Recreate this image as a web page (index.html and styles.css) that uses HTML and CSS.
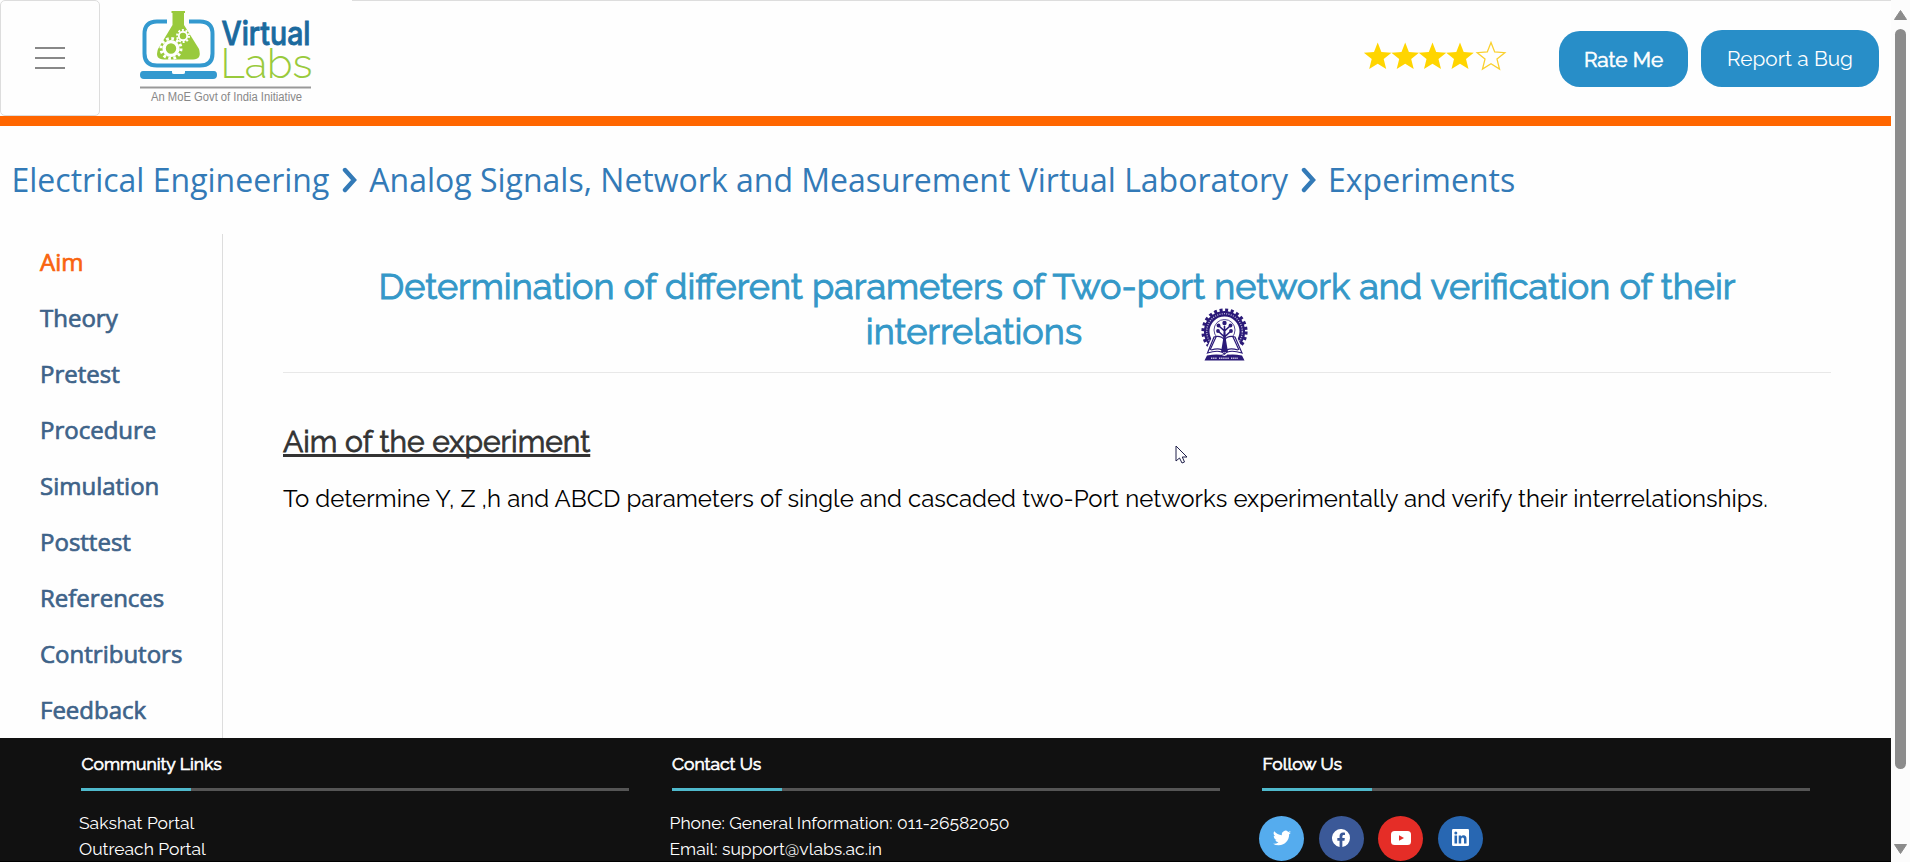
FILE: index.html
```
<!DOCTYPE html>
<html lang="en">
<head>
<meta charset="utf-8">
<title>Virtual Labs</title>
<link rel="stylesheet" href="styles.css">
</head>
<body>
<div class="page">
  <div class="content">
    <header class="header">
      <button class="menu" aria-label="Menu"><span></span><span></span><span></span></button>
      <svg class="logo" width="176" height="96" viewBox="138 8 176 96">
        <g fill="none" stroke="#3399cf" stroke-width="4">
          <path d="M167 21.500H157Q144.500 21.500 144.500 34V53.500Q144.500 65.500 157 65.500H200Q212.500 65.500 212.500 53.500V34Q212.500 21.500 200 21.500H189"/>
        </g>
        <path fill="#3399cf" d="M143 71H172V72.500Q172 74 174 74H183Q185 74 185 72.500V71H214Q217 71 217 75Q217 79 213 79H144Q140 79 140 75Q140 71 143 71Z"/>
        <path fill="#99ca3c" d="M171.500 11H185V13H184V25L199 49Q202 59.500 193 59.500H164Q154.500 59.500 158 49L172.500 25V13H171.500Z"/>
        <g fill="none" stroke="#fff">
          <circle cx="171" cy="48.500" r="6.900" stroke-width="3.400"/>
          <circle cx="171" cy="48.500" r="10" stroke-width="3" stroke-dasharray="2.700 2.536"/>
          <circle cx="183" cy="36" r="4.200" stroke-width="1.900"/>
          <circle cx="183" cy="36" r="6" stroke-width="1.900" stroke-dasharray="2 1.770"/>
        </g>
        <text class="logo-virtual" x="221.500" y="44.500" textLength="89" lengthAdjust="spacingAndGlyphs">Virtual</text>
        <text class="logo-labs" x="220.500" y="78" textLength="92" lengthAdjust="spacingAndGlyphs">Labs</text>
        <path d="M140 87.500H311" stroke="#999" stroke-width="1.800"/>
        <text class="logo-tag" x="151" y="101" textLength="151" lengthAdjust="spacingAndGlyphs">An MoE Govt of India Initiative</text>
      </svg>
      <div class="header-rest">
        <svg class="stars" width="144" height="30" viewBox="1363 41 144 30">
          <defs>
            <path id="star" d="M0 -14L3.700 -4.500L13.800 -3.800L6 2.600L8.500 12.500L0 7.200L-8.500 12.500L-6 2.600L-13.800 -3.800L-3.700 -4.500Z"/>
          </defs>
          <g fill="#ffd500">
            <use href="#star" x="1377.700" y="56.500"/>
            <use href="#star" x="1405.200" y="56.500"/>
            <use href="#star" x="1432.500" y="56.500"/>
            <use href="#star" x="1460" y="56.500"/>
          </g>
          <use href="#star" x="1491" y="56.500" fill="none" stroke="#fad02e" stroke-width="1.300"/>
        </svg>
        <button class="btn btn-rate">Rate Me</button>
        <button class="btn btn-bug">Report a Bug</button>
      </div>
    </header>

    <nav class="crumbs">
      <a>Electrical Engineering</a>
      <svg width="16" height="26" viewBox="0 0 16 26"><path d="M3 3L12 13L3 23" fill="none" stroke="#337ab7" stroke-width="4.400" stroke-linecap="round"/></svg>
      <a>Analog Signals, Network and Measurement Virtual Laboratory</a>
      <svg width="16" height="26" viewBox="0 0 16 26"><path d="M3 3L12 13L3 23" fill="none" stroke="#337ab7" stroke-width="4.400" stroke-linecap="round"/></svg>
      <a>Experiments</a>
    </nav>

    <div class="main">
      <nav class="side">
        <a class="active">Aim</a>
        <a>Theory</a>
        <a>Pretest</a>
        <a>Procedure</a>
        <a>Simulation</a>
        <a>Posttest</a>
        <a>References</a>
        <a>Contributors</a>
        <a>Feedback</a>
      </nav>
      <main class="article">
        <h1 class="title">
          <span class="title-a">Determination of different parameters of Two-port network and verification of their</span>
          <span class="title-b"><span>interrelations</span>
            <svg class="emblem" width="47" height="53" viewBox="0 0 47 53">
              <g fill="none" stroke="#2b1a78">
                <circle cx="23.500" cy="23.500" r="17.800" stroke-width="5.600"/>
                <circle cx="23.500" cy="23.500" r="21.300" stroke-width="3.600" stroke-dasharray="3 2.576"/>
                <circle cx="23.500" cy="23.500" r="17.800" stroke="#c9c3e2" stroke-width="1.300" stroke-dasharray="1 1.300"/>
                <circle cx="23.500" cy="22" r="10.500" stroke-width=".8"/>
              </g>
              <path fill="#fff" d="M3 46L11 29Q20 27 23.500 32Q27 27 36 29L44 46Z"/>
              <g fill="none" stroke="#2b1a78" stroke-width="1.200">
                <path d="M6.500 45L13 29Q20 27 23.500 32Q27 27 34 29L41 45Q28 41 23.500 46Q19 41 6.500 45Z"/>
                <path d="M9 42L15 29M38 42L32 29M10 42Q20 39 23.500 44Q27 39 37 42"/>
                <path d="M23.500 43V18M23.500 29L17 23M23.500 29L30 23M23.500 23L18 18M23.500 23L29 18" stroke-width="1.600"/>
              </g>
              <g fill="#2b1a78">
                <path d="M20 44L22 32L23.500 16L25 32L27 44Z"/>
                <circle cx="23.500" cy="15" r="2.200"/><circle cx="17.500" cy="17.500" r="1.900"/><circle cx="29.500" cy="17.500" r="1.900"/>
                <circle cx="17" cy="23" r="1.900"/><circle cx="30" cy="23" r="1.900"/>
                <path d="M6 47.500Q18 45.500 23.500 48Q29 45.500 41 47.500L43.500 52.500H3.500Z"/>
              </g>
              <path d="M10 50.300H16M18 50.300H28M30 50.300H37" stroke="#c9c3e2" stroke-width="1.500" stroke-dasharray="1.400 .7"/>
            </svg>
          </span>
        </h1>
        <h2 class="sub">Aim of the experiment</h2>
        <p class="para">To determine Y, Z ,h and ABCD parameters of single and cascaded two-Port networks experimentally and verify their interrelationships.</p>
        <svg class="cursor" width="14" height="20" viewBox="0 0 14 20"><path d="M1 1V16L4.500 13L7 18L9.500 17L7.300 12H12Z" fill="#fff" stroke="#20204a" stroke-width="1"/></svg>
      </main>
    </div>

    <footer class="footer">
      <section class="col">
        <h3>Community Links</h3>
        <div class="rule"></div>
        <ul class="links"><li>Sakshat Portal</li><li>Outreach Portal</li></ul>
      </section>
      <section class="col">
        <h3>Contact Us</h3>
        <div class="rule"></div>
        <ul class="links"><li>Phone: General Information: 011-26582050</li><li>Email: support@vlabs.ac.in</li></ul>
      </section>
      <section class="col">
        <h3>Follow Us</h3>
        <div class="rule"></div>
        <div class="social">
          <a class="tw"><svg width="18" height="18" viewBox="0 0 24 24"><path fill="#fff" d="M24 4.600a10 10 0 0 1-2.800.8 5 5 0 0 0 2.200-2.700c-1 .5-2 1-3.100 1.200a4.900 4.900 0 0 0-8.400 4.500C7.700 8.100 4.100 6.100 1.700 3.100a4.900 4.900 0 0 0 1.500 6.600c-.8 0-1.600-.2-2.200-.6v.1a4.900 4.900 0 0 0 3.900 4.800 5 5 0 0 1-2.200.1 4.900 4.900 0 0 0 4.600 3.400A9.900 9.900 0 0 1 0 19.500 14 14 0 0 0 7.500 21.700c9.100 0 14-7.500 14-14v-.6A10 10 0 0 0 24 4.600z"/></svg></a>
          <a class="fb"><svg width="18" height="18" viewBox="0 0 24 24"><path fill="#fff" d="M24 12a12 12 0 1 0-13.900 11.900v-8.400H7.100V12h3V9.400c0-3 1.800-4.700 4.500-4.700 1.300 0 2.700.2 2.700.2v3h-1.500c-1.500 0-2 .9-2 1.900V12h3.300l-.5 3.500h-2.800v8.400A12 12 0 0 0 24 12z"/></svg></a>
          <a class="yt"><svg width="20" height="14" viewBox="0 0 20 14"><rect width="20" height="14" rx="3.500" fill="#fff"/><path fill="#e52d27" d="M8 4.300L13 7L8 9.700Z"/></svg></a>
          <a class="li"><svg width="17" height="17" viewBox="0 0 17 17"><rect width="17" height="17" rx="1.200" fill="#fff"/><g fill="#2867b2"><circle cx="3.800" cy="3.900" r="1.500"/><path d="M2.500 6.400H5.100V14.500H2.500ZM6.700 6.400H9.100V7.500Q9.900 6.200 11.600 6.200Q14.500 6.200 14.500 9.700V14.500H12V10.200Q12 8.400 10.700 8.400Q9.200 8.400 9.200 10.200V14.500H6.700Z"/></g></svg></a>
        </div>
      </section>
    </footer>
  </div>
  <div class="scrollbar">
    <svg width="13" height="11" viewBox="0 0 13 11"><path d="M6.500 .5L12.500 9.500H.5Z" fill="#8b8b8b" stroke="#8b8b8b" stroke-linejoin="round"/></svg>
    <div class="thumb"></div>
    <svg class="down" width="13" height="11" viewBox="0 0 13 11"><path d="M6.500 10.500L12.500 1.500H.5Z" fill="#8b8b8b" stroke="#8b8b8b" stroke-linejoin="round"/></svg>
  </div>
</div>
</body>
</html>
```
FILE: styles.css
```
* { box-sizing: border-box; }
body { margin: 0; background: #fefefe; overflow: hidden; font-family: Raleway, Lato, sans-serif; font-variant-numeric: oldstyle-nums; }
.page { display: flex; height: 862px; overflow: hidden; }
.content { width: 1891px; flex: none; }
h1, h2, h3, p, ul { margin: 0; padding: 0; }
button { font-family: inherit; padding: 0; }

.header { display: flex; height: 126px; border-bottom: 10px solid #f60; }
.menu { width: 100px; height: 116px; border: 1px solid #ddd; border-radius: 5px; background: none;
  display: flex; flex-direction: column; align-items: center; justify-content: center; gap: 7.300px; }
.menu span { width: 30px; height: 2.600px; background: #888; }
.logo { margin: 8px 0 0 38px; flex: none; overflow: visible; }
.header-rest { flex: 1; margin-left: 38px; border-top: 1px solid #ddd; display: flex; justify-content: flex-end; padding: 29px 12px 0 0; }
.logo-virtual { font: 500 33px Inter, sans-serif; fill: #1b6a9e; stroke: #1b6a9e; stroke-width: .9px; }
.logo-labs { font: 300 41px Raleway, Lato, sans-serif; fill: #99ca3c; }
.logo-tag { font: 12px "Liberation Sans", sans-serif; fill: #888; }
.stars { margin: 11px 52px 0 0; }
.btn { border: 0; border-radius: 21px; background: #288ec8; color: #fff; font-size: 20.800px; height: 57px; }
.btn-rate { width: 129px; height: 56px; margin: 1px 13px 0 0; -webkit-text-stroke: .6px #fff; }
.btn-bug { width: 178px; }

.crumbs { height: 108px; padding: 31px 0 0 11.500px; display: flex; font: 32px/46px "Open Sans", sans-serif; color: #337ab7; }
.crumbs svg { margin: 10px 11px 0 13px; }

.main { display: flex; height: 504px; }
.side { flex: none; width: 223px; border-right: 1px solid #ddd; padding-left: 40px; font: 24px/56px "Open Sans", sans-serif; color: #3e6389; -webkit-text-stroke: .7px currentColor; }
.side a { display: block; }
.side .active { color: #f9640e; }
.article { position: relative; flex: 1; min-width: 0; padding: 30px 60px 0; }
.title { height: 109px; border-bottom: 1px solid #e8e8e8; color: #3498c8; font-weight: 400; font-size: 36px; line-height: 45px; -webkit-text-stroke: 1px currentColor; text-align: center; }
.title-a { display: block; white-space: nowrap; }
.title-b { display: flex; justify-content: center; gap: 119px; }
.emblem { margin-top: -1px; }
.sub { margin-top: 51px; font-weight: 400; font-size: 30px; line-height: 36px; color: #333; -webkit-text-stroke: .8px currentColor; text-decoration: underline; text-decoration-thickness: 3px; text-underline-offset: 2px; text-decoration-skip-ink: none; }
.para { margin-top: 21px; font-size: 24px; line-height: 36px; color: #000; white-space: nowrap; }
.cursor { position: absolute; left: 952px; top: 211px; }

.footer { height: 124px; padding-left: 81px; display: flex; gap: 42.500px; background: #111; color: #fff; border-bottom: 1px solid #000; overflow: hidden; }
.col { width: 548px; flex: none; padding-top: 13px; }
.col h3 { font-weight: 400; font-size: 17.500px; line-height: 26px; text-indent: .5px; -webkit-text-stroke: .7px currentColor; }
.rule { height: 3px; margin-top: 11px; background: linear-gradient(to right, #4fb9cc 20%, #555 20%); }
.links { list-style: none; margin: 19px 0 0 -2px; font-size: 17.500px; line-height: 26px; }
.social { display: flex; gap: 14.600px; margin: 25px 0 0 -3px; }
.social a { width: 45px; height: 45px; border-radius: 50%; display: flex; align-items: center; justify-content: center; padding-bottom: 2px; }
.tw { background: #55acee; }
.fb { background: #3b5998; }
.yt { background: #e52d27; }
.li { background: #2867b2; }

.scrollbar { width: 19px; background: #fcfcfc; display: flex; flex-direction: column; align-items: center; padding-top: 10px; }
.thumb { width: 11px; height: 740px; margin-top: 8px; border-radius: 6px; background: #8b8b8b; }
.down { margin-top: 74px; }
```
